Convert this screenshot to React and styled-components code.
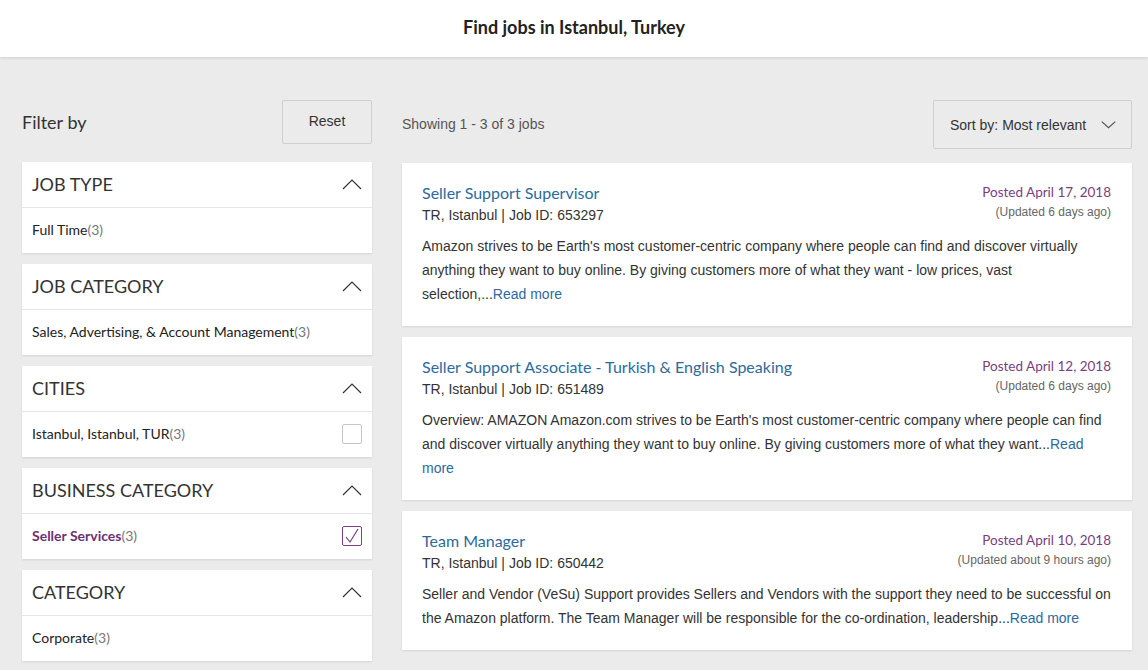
import React from "react";
import styled, { createGlobalStyle } from "styled-components";

const GlobalStyle = createGlobalStyle`
  body {
    margin: 0;
    background: #ebebeb;
    font-family: "Liberation Sans", Arial, sans-serif;
    color: #333;
  }
`;

const HUMAN = `Lato, "Open Sans", sans-serif`;

const Header = styled.header`
  height: 57px;
  background: #fff;
  box-shadow: 0 1px 3px rgba(0, 0, 0, 0.12);
  display: flex;
  align-items: center;
  justify-content: center;
`;

const PageTitle = styled.h1`
  margin: 0 0 4px;
  font-family: ${HUMAN};
  font-size: 18px;
  font-weight: 700;
  color: #222;
`;

const Main = styled.main`
  display: grid;
  grid-template-columns: 350px 730px;
  column-gap: 30px;
  padding: 43px 16px 0 22px;
`;

const Column = styled.div`
  display: flex;
  flex-direction: column;
`;

const Toolbar = styled.div`
  display: flex;
  align-items: center;
  justify-content: space-between;
  height: ${(p) => p.$h}px;
  margin-bottom: ${(p) => p.$mb}px;
`;

const FilterLabel = styled.span`
  font-family: ${HUMAN};
  font-size: 18px;
  color: #333;
`;

const ResetButton = styled.button`
  width: 90px;
  height: 44px;
  background: #ebebeb;
  border: 1px solid #cfcfcf;
  border-radius: 2px;
  font-family: "Liberation Sans", Arial, sans-serif;
  font-size: 14px;
  color: #333;
  padding: 0 0 2px;
`;

const Showing = styled.span`
  font-size: 14px;
  color: #555;
  padding-bottom: 2px;
`;

const SortBox = styled.div`
  width: 199px;
  height: 49px;
  box-sizing: border-box;
  border: 1px solid #cfcfcf;
  border-radius: 2px;
  display: flex;
  align-items: center;
  justify-content: space-between;
  padding: 0 15px 0 16px;
  font-size: 14px;
  color: #333;
`;

const Panel = styled.section`
  background: #fff;
  box-shadow: 0 1px 2px rgba(0, 0, 0, 0.1);
  margin-bottom: 11px;
`;

const PanelHead = styled.div`
  height: 45px;
  box-sizing: border-box;
  display: flex;
  align-items: center;
  justify-content: space-between;
  padding: 0 10px 2px;
  border-bottom: 1px solid #e6e6e6;
  font-family: ${HUMAN};
  font-size: 18px;
  color: #333;
  height: 46px;
`;

const PanelBody = styled.div`
  height: 45px;
  box-sizing: border-box;
  display: flex;
  align-items: center;
  justify-content: space-between;
  padding: 0 10px 2px;
  font-family: ${HUMAN};
  font-size: 14px;
`;

const OptionName = styled.span`
  color: ${(p) => (p.$active ? "#6e2f75" : "#222")};
  font-weight: ${(p) => (p.$active ? 700 : 400)};
`;

const Count = styled.span`
  color: #777;
`;

const CheckBox = styled.span`
  width: 18px;
  height: 18px;
  border: 1px solid ${(p) => (p.$checked ? "#7b3f83" : "#c6c6c6")};
  border-radius: 2px;
  display: flex;
  align-items: center;
  justify-content: center;
`;

const Card = styled.article`
  background: #fff;
  box-shadow: 0 1px 2px rgba(0, 0, 0, 0.1);
  margin-bottom: 11px;
  padding: 20px 21px 20px 20px;
`;

const CardTop = styled.div`
  display: flex;
  justify-content: space-between;
  align-items: flex-start;
`;

const JobTitle = styled.a`
  display: block;
  font-family: ${HUMAN};
  font-size: 16px;
  line-height: 20px;
  color: #2d6a9c;
  text-decoration: none;
`;

const Meta = styled.div`
  font-size: 14px;
  line-height: 24px;
  color: #333;
`;

const Dates = styled.div`
  text-align: right;
`;

const Posted = styled.div`
  font-family: ${HUMAN};
  font-size: 13.5px;
  line-height: 18px;
  color: #7b3d80;
`;

const Updated = styled.div`
  font-size: 12px;
  line-height: 22px;
  color: #666;
`;

const Desc = styled.p`
  margin: 7px 0 0;
  font-size: 14px;
  line-height: 24px;
  color: #333;
`;

const ReadMore = styled.a`
  color: #2d6a9c;
  text-decoration: none;
`;

const Chevron = ({ up = true, color = "#333", w = 20, h = 12 }) => (
  <svg width={w} height={h} viewBox="0 0 20 12" preserveAspectRatio="none">
    <polyline
      points={up ? "1,11 10,2 19,11" : "1,1 10,10 19,1"}
      fill="none"
      stroke={color}
      strokeWidth="1.2"
      vectorEffect="non-scaling-stroke"
    />
  </svg>
);

const filters = [
  { title: "JOB TYPE", name: "Full Time", count: 3 },
  { title: "JOB CATEGORY", name: "Sales, Advertising, & Account Management", count: 3 },
  { title: "CITIES", name: "Istanbul, Istanbul, TUR", count: 3, box: "empty" },
  { title: "BUSINESS CATEGORY", name: "Seller Services", count: 3, box: "checked" },
  { title: "CATEGORY", name: "Corporate", count: 3 },
];

const jobs = [
  {
    title: "Seller Support Supervisor",
    id: "653297",
    posted: "Posted April 17, 2018",
    updated: "(Updated 6 days ago)",
    desc: "Amazon strives to be Earth's most customer-centric company where people can find and discover virtually anything they want to buy online. By giving customers more of what they want - low prices, vast selection,...",
  },
  {
    title: "Seller Support Associate - Turkish & English Speaking",
    id: "651489",
    posted: "Posted April 12, 2018",
    updated: "(Updated 6 days ago)",
    desc: "Overview: AMAZON Amazon.com strives to be Earth's most customer-centric company where people can find and discover virtually anything they want to buy online. By giving customers more of what they want...",
  },
  {
    title: "Team Manager",
    id: "650442",
    posted: "Posted April 10, 2018",
    updated: "(Updated about 9 hours ago)",
    desc: "Seller and Vendor (VeSu) Support provides Sellers and Vendors with the support they need to be successful on the Amazon platform. The Team Manager will be responsible for the co-ordination, leadership...",
  },
];

export default function App() {
  return (
    <>
      <GlobalStyle />
      <Header>
        <PageTitle>Find jobs in Istanbul, Turkey</PageTitle>
      </Header>
      <Main>
        <Column>
          <Toolbar $h={44} $mb={18}>
            <FilterLabel>Filter by</FilterLabel>
            <ResetButton>Reset</ResetButton>
          </Toolbar>
          {filters.map((f) => (
            <Panel key={f.title}>
              <PanelHead>
                {f.title}
                <Chevron />
              </PanelHead>
              <PanelBody>
                <span>
                  <OptionName $active={f.box === "checked"}>{f.name}</OptionName>
                  <Count>({f.count})</Count>
                </span>
                {f.box && (
                  <CheckBox $checked={f.box === "checked"}>
                    {f.box === "checked" && (
                      <svg width="14" height="16" viewBox="0 0 14 16">
                        <polyline
                          points="1,9 5,14 13,1"
                          fill="none"
                          stroke="#7b3f83"
                          strokeWidth="1.2"
                        />
                      </svg>
                    )}
                  </CheckBox>
                )}
              </PanelBody>
            </Panel>
          ))}
        </Column>
        <Column>
          <Toolbar $h={49} $mb={14}>
            <Showing>Showing 1 - 3 of 3 jobs</Showing>
            <SortBox>
              Sort by: Most relevant
              <Chevron up={false} color="#555" w={15} h={8} />
            </SortBox>
          </Toolbar>
          {jobs.map((j) => (
            <Card key={j.id}>
              <CardTop>
                <div>
                  <JobTitle href="#">{j.title}</JobTitle>
                  <Meta>TR, Istanbul | Job ID: {j.id}</Meta>
                </div>
                <Dates>
                  <Posted>{j.posted}</Posted>
                  <Updated>{j.updated}</Updated>
                </Dates>
              </CardTop>
              <Desc>
                {j.desc}
                <ReadMore href="#">Read more</ReadMore>
              </Desc>
            </Card>
          ))}
        </Column>
      </Main>
    </>
  );
}
